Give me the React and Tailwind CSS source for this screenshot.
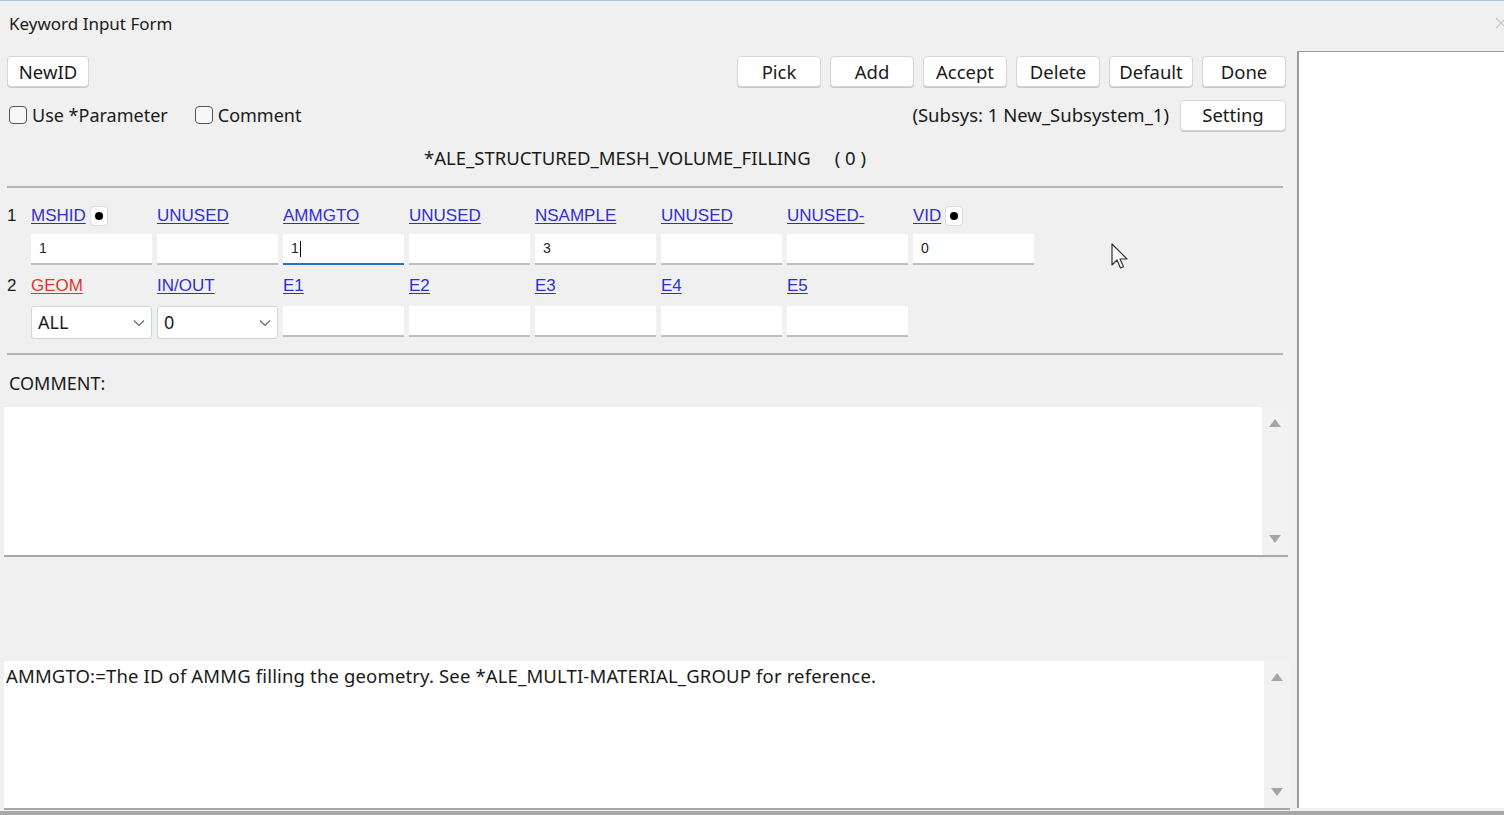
import React from "react";

const ui = { fontFamily: '"Noto Sans", "Open Sans", sans-serif' };
const lbl = { fontFamily: '"Liberation Sans", Arial, sans-serif' };

function Btn({ children, w = "w-[84px]" }) {
  return (
    <button className={`${w} h-[31px] bg-white border border-[#d6d6d6] rounded-[4px] shadow-[0_1px_0_#c8c8c8] text-[18.5px] text-[#1a1a1a] flex items-center justify-center`}>
      {children}
    </button>
  );
}

function Check({ label }) {
  return (
    <label className="flex items-center gap-[5px] text-[18px] text-[#1a1a1a]">
      <span className="w-[18px] h-[18px] rounded-[4px] border border-[#555] bg-[#f7f7f7]" />
      {label}
    </label>
  );
}

function Dot() {
  return (
    <span className="ml-[4px] w-[18px] h-[20px] rounded-[4px] bg-white border border-[#dcdcdc] flex items-center justify-center">
      <span className="w-[8px] h-[8px] rounded-full bg-black" />
    </span>
  );
}

function Label({ text, red, dot }) {
  return (
    <div className="w-[126px] h-[22px] flex items-center">
      <span
        style={lbl}
        className={`text-[17px] underline underline-offset-[2px] ${red ? "text-[#e0352b]" : "text-[#2f2fd0]"}`}
      >
        {text}
      </span>
      {dot && <Dot />}
    </div>
  );
}

function Field({ value, focus }) {
  return (
    <div className="w-[126px]">
      <div
        className={`w-[121px] h-[31px] bg-white flex items-center pl-[8px] text-[14px] text-[#222] border-b-2 ${
          focus ? "border-[#2a6fcf]" : "border-[#bdbdbd]"
        }`}
        style={lbl}
      >
        {value}
        {focus && <span className="ml-[1px] w-[1px] h-[16px] bg-black" />}
      </div>
    </div>
  );
}

function Select({ value }) {
  return (
    <div className="w-[126px]">
      <div className="w-[121px] h-[33px] bg-white border border-[#cfd6de] rounded-[3px] flex items-center justify-between pl-[6px] pr-[6px] text-[18px] text-[#1a1a1a]">
        <span>{value}</span>
        <svg width="12" height="8" viewBox="0 0 12 8">
          <path d="M1 1.5 L6 6.5 L11 1.5" fill="none" stroke="#666" strokeWidth="1.2" />
        </svg>
      </div>
    </div>
  );
}

function Scroll() {
  return (
    <div className="w-[26px] bg-[#f2f2f2] flex flex-col items-center justify-between py-[12px]">
      <svg width="12" height="8" viewBox="0 0 12 8">
        <path d="M0 8 L6 0 L12 8 Z" fill="#a6a6a6" />
      </svg>
      <svg width="12" height="8" viewBox="0 0 12 8">
        <path d="M0 0 L12 0 L6 8 Z" fill="#a6a6a6" />
      </svg>
    </div>
  );
}

export default function App() {
  return (
    <div
      style={ui}
      className="w-[1504px] h-[815px] bg-[#f0f0f0] border-t border-[#a9c2e0] overflow-hidden relative"
    >
      <div className="h-[50px] flex items-start justify-between">
        <div className="pl-[9px] pt-[10px] text-[17px] text-[#1a1a1a]">Keyword Input Form</div>
        <svg className="mt-[16px]" width="10" height="12" viewBox="0 0 10 12">
          <path d="M2 1 L12 11 M2 11 L12 1" stroke="#c4c4c4" strokeWidth="1.2" />
        </svg>
      </div>

      <div className="flex h-[764px]">
        <div className="w-[1297px] flex flex-col">
          {/* buttons */}
          <div className="mt-[5px] h-[31px] flex justify-between pl-[7px] pr-[11px]">
            <Btn w="w-[82px]">NewID</Btn>
            <div className="flex gap-[9px]">
              <Btn>Pick</Btn>
              <Btn>Add</Btn>
              <Btn>Accept</Btn>
              <Btn>Delete</Btn>
              <Btn>Default</Btn>
              <Btn>Done</Btn>
            </div>
          </div>

          {/* checks */}
          <div className="mt-[13px] h-[30px] flex items-center justify-between pl-[9px] pr-[11px]">
            <div className="flex items-center gap-[27px]">
              <Check label="Use *Parameter" />
              <Check label="Comment" />
            </div>
            <div className="flex items-center gap-[11px]">
              <span className="text-[18.5px] text-[#1a1a1a]">(Subsys: 1 New_Subsystem_1)</span>
              <Btn w="w-[106px]">Setting</Btn>
            </div>
          </div>

          {/* keyword title */}
          <div className="mt-[18px] h-[20px] w-[1290px] flex justify-center text-[18.5px] leading-[20px] text-[#1a1a1a]">
            <span>*ALE_STRUCTURED_MESH_VOLUME_FILLING</span>
            <span className="ml-[24px]">( 0 )</span>
          </div>

          <div className="mt-[18px] ml-[7px] w-[1276px] h-[2px] bg-[#b4b4b4]" />

          {/* row 1 */}
          <div className="mt-[17px] flex pl-[7px]">
            <div className="w-[24px] h-[22px] flex items-center text-[17px] text-[#1a1a1a]" style={lbl}>1</div>
            <Label text="MSHID" dot />
            <Label text="UNUSED" />
            <Label text="AMMGTO" />
            <Label text="UNUSED" />
            <Label text="NSAMPLE" />
            <Label text="UNUSED" />
            <Label text="UNUSED-" />
            <Label text="VID" dot />
          </div>
          <div className="mt-[7px] flex pl-[31px]">
            <Field value="1" />
            <Field value="" />
            <Field value="1" focus />
            <Field value="" />
            <Field value="3" />
            <Field value="" />
            <Field value="" />
            <Field value="0" />
          </div>

          {/* row 2 */}
          <div className="mt-[10px] flex pl-[7px]">
            <div className="w-[24px] h-[22px] flex items-center text-[17px] text-[#1a1a1a]" style={lbl}>2</div>
            <Label text="GEOM" red />
            <Label text="IN/OUT" />
            <Label text="E1" />
            <Label text="E2" />
            <Label text="E3" />
            <Label text="E4" />
            <Label text="E5" />
          </div>
          <div className="mt-[9px] flex pl-[31px] items-start">
            <Select value="ALL" />
            <Select value="0" />
            <Field value="" />
            <Field value="" />
            <Field value="" />
            <Field value="" />
            <Field value="" />
          </div>

          <div className="mt-[14px] ml-[7px] w-[1276px] h-[2px] bg-[#b4b4b4]" />

          <div className="mt-[18px] h-[20px] pl-[9px] text-[18px] leading-[20px] text-[#1a1a1a]">COMMENT:</div>

          {/* comment box */}
          <div className="mt-[14px] ml-[4px] w-[1284px] h-[150px] flex border-b-2 border-[#a8a8a8]">
            <div className="flex-1 bg-white" />
            <Scroll />
          </div>

          {/* help box */}
          <div className="mt-[104px] ml-[4px] w-[1286px] h-[149px] flex border-b-2 border-[#a8a8a8]">
            <div className="flex-1 bg-white pl-[2px] pt-[3px] text-[18.5px] tracking-[0.15px] text-[#1a1a1a] leading-[24px]">
              AMMGTO:=The ID of AMMG filling the geometry. See *ALE_MULTI-MATERIAL_GROUP for reference.
            </div>
            <Scroll />
          </div>
        </div>

        {/* right panel */}
        <div className="w-[207px] h-[757px] bg-white border-l-2 border-t border-[#9a9a9a]" />
      </div>

      <div className="absolute left-0 bottom-0 w-[1504px] h-[4px] bg-[#a8a8a8]" />

      {/* mouse cursor */}
      <svg className="absolute left-[1111px] top-[242px]" width="20" height="28" viewBox="0 0 20 28">
        <path
          d="M1 1 L1 22 L6 17 L9.5 25 L12.5 23.8 L9 16 L16 16 Z"
          fill="white"
          stroke="#333"
          strokeWidth="1.2"
          strokeLinejoin="round"
        />
      </svg>
    </div>
  );
}
